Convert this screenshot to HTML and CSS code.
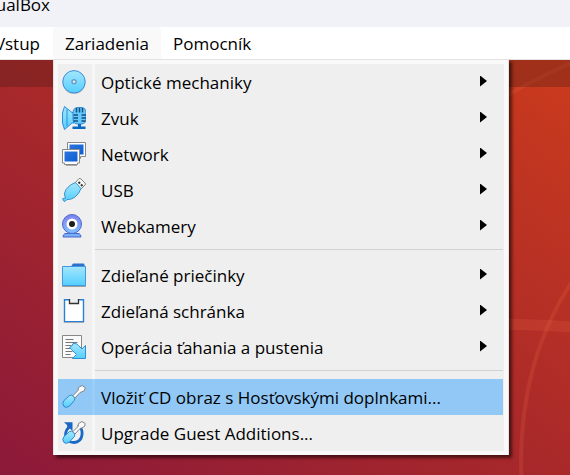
FILE: index.html
```html
<!DOCTYPE html>
<html lang="sk">
<head>
<meta charset="utf-8">
<title>VirtualBox</title>
<link rel="stylesheet" href="styles.css">
</head>
<body>
<header class="titlebar"><span class="title">ualBox</span></header>
<nav class="menubar">
  <button class="menubar-item menubar-first" type="button">Vstup</button>
  <div class="menu-anchor">
    <button class="menubar-item menubar-open" type="button" aria-expanded="true">Zariadenia</button>
    <div class="menu" role="menu">
      <div class="group">
        <button class="item" role="menuitem" type="button">
          <span class="icon"><svg viewBox="0 0 24 24"><circle cx="12" cy="12.500" r="11.500" fill="#999" opacity=".5"/><circle cx="12" cy="11.800" r="11.200" fill="url(#blue)" stroke="#3f8ed8"/><circle cx="12" cy="11.800" r="2" fill="#e4eef4" stroke="#6b9fc9" stroke-width="1.500"/></svg></span>
          <span class="label">Optické mechaniky</span><span class="arrow"></span>
        </button>
        <button class="item" role="menuitem" type="button">
          <span class="icon"><svg viewBox="0 0 24 24"><path d="M.5 7 2.500.5 10 6.500h2V17h-2l-7.500 6.500L.5 17z" fill="url(#blue)" stroke="#2d8bd8"/><path d="M5 3v17" stroke="#2d8bd8" fill="none"/><path d="M11 7q0-5.500 5-5.500h3q5 0 5 5.500v6q0 5-5 5h-3q-5 0-5-5z" fill="#64c9ff" stroke="#2f8ad8"/><path d="M14.500 2v4.500m3-4.500v4.500m3-4.500v4.500" stroke="#164d7b" stroke-width="1.500"/><path d="M11.500 9H16m3.500 0H24M11.500 12H16m3.500 0H24M11.500 15H16m3.500 0h4" stroke="#164d7b" stroke-width="1.500"/><path d="M16 18h3v2.500h4.500v2.500h-13v-2.500H16z" fill="#0868c4"/></svg></span>
          <span class="label">Zvuk</span><span class="arrow"></span>
        </button>
        <button class="item" role="menuitem" type="button">
          <span class="icon"><svg viewBox="0 0 24 24"><path d="M5.500.5h18v14h-5v2h-13z" fill="#fff" stroke="#888"/><path d="M7.500 2.500h14v10h-14z" fill="url(#screen)"/><path d="M.5 7.500h17v13.500h-2v1.500h-13V21h-2z" fill="#fff" stroke="#888"/><path d="M2.500 9.500h13v10h-13z" fill="url(#screen)"/><path d="M4 23.500h11" stroke="#aaa"/></svg></span>
          <span class="label">Network</span><span class="arrow"></span>
        </button>
        <button class="item" role="menuitem" type="button">
          <span class="icon"><svg viewBox="0 0 24 24"><path d="m12.500 5.500 4.500-5q1-.5 2 .5L23 5q1 1 0 2l-5 5z" fill="#f7f7f7" stroke="#858585"/><path d="m16.500 4 1.500 1.500M19 6.500 20.500 8" stroke="#333" stroke-width="2"/><path d="M3.500 20Q1 16 4 11.500 8 6 13.500 4.500l5.500 6q-1.500 5-6.500 9-4 2.500-7.500 2L3 23.500Q.5 23 .8 20.500z" fill="url(#blue)" stroke="#3f91c9"/></svg></span>
          <span class="label">USB</span><span class="arrow"></span>
        </button>
        <button class="item" role="menuitem" type="button">
          <span class="icon"><svg viewBox="0 0 24 24"><path d="M3 19.500h14q2 1 2 3.500H1q0-2.500 2-3.500z" fill="#78aefa" stroke="#4968c8"/><circle cx="10" cy="10" r="9.500" fill="url(#lens)" stroke="#4968c8"/><circle cx="10" cy="10" r="5.500" fill="#fff"/><circle cx="10" cy="10" r="3" fill="#1d1d1d"/></svg></span>
          <span class="label">Webkamery</span><span class="arrow"></span>
        </button>
      </div>
      <hr class="separator">
      <div class="group">
        <button class="item" role="menuitem" type="button">
          <span class="icon"><svg viewBox="0 0 24 24"><path d="m9 3.500 2-3h11l1 3v1H9z" fill="#2c70ce"/><path d="M.5 3.500h23v19H.5z" fill="url(#blue)" stroke="#4399dd"/><path d="M0 23.500h24" stroke="#9e9e9e"/></svg></span>
          <span class="label">Zdieľané priečinky</span><span class="arrow"></span>
        </button>
        <button class="item" role="menuitem" type="button">
          <span class="icon"><svg viewBox="0 0 24 24"><path d="M2.500.8h19v22h-19z" fill="#fff" stroke="#2880d8" stroke-width="1.400"/><path d="M7.500 0v4.500h9V0" fill="#ededed" stroke="#333" stroke-width="1.300"/><path d="M2 23.700h20" stroke="#aaa"/></svg></span>
          <span class="label">Zdieľaná schránka</span><span class="arrow"></span>
        </button>
        <button class="item" role="menuitem" type="button">
          <span class="icon"><svg viewBox="0 0 24 24"><path d="M.5.5h19v22H.5z" fill="#fafafa" stroke="#888"/><path d="M3.500 4.500h8m-8 3h12m-12 3h6m-6 3h5m-5 3h7m-7 3h5" stroke="#777"/><path d="M7.500 12.500q3-1 3.500-4 4-.5 5.500 2l3.500 3.500 3.500-3.500v13h-13l4-4-4-4q-1.500-2-3-3z" fill="url(#blue)" stroke="#2f8fd4"/></svg></span>
          <span class="label">Operácia ťahania a pustenia</span><span class="arrow"></span>
        </button>
      </div>
      <hr class="separator">
      <div class="group group-last">
        <button class="item item-active" role="menuitem" type="button">
          <span class="icon"><svg viewBox="0 0 24 24"><use href="#driver"/></svg></span>
          <span class="label">Vložiť CD obraz s Hosťovskými doplnkami...</span>
        </button>
        <button class="item" role="menuitem" type="button">
          <span class="icon"><svg viewBox="0 0 24 24"><path d="M16 4Q21 8 20 14q-1 7-8 7.500-7 0-8.500-6Q3 9 8 5" fill="none" stroke="#1769c5" stroke-width="2.800"/><path d="M2 1.200h8.500v9L8 7.500 6 9 5 4z" fill="#1769c5"/><use href="#driver"/></svg></span>
          <span class="label">Upgrade Guest Additions...</span>
        </button>
      </div>
    </div>
  </div>
  <button class="menubar-item" type="button">Pomocník</button>
</nav>
<main class="desktop">
  <svg class="rings" viewBox="0 0 570 415" preserveAspectRatio="xMaxYMin slice">
    <path d="M500 40Q533 19 580-1" stroke-width="4"/>
    <path d="M490 265Q530 263 580 268" stroke-width="11"/>
    <path d="M580 210C540 265 516 335 522 430" stroke-width="4"/>
  </svg>
  <div class="panel"></div>
</main>
<svg class="defs" width="0" height="0">
  <defs>
    <linearGradient id="blue" x2="0" y2="1"><stop stop-color="#a4e6fd"/><stop offset="1" stop-color="#54cfff"/></linearGradient>
    <linearGradient id="screen" x2="1" y2="1"><stop stop-color="#2b74da"/><stop offset="1" stop-color="#0b5fd6"/></linearGradient>
    <linearGradient id="lens" x2="0" y2="1"><stop stop-color="#8080ee"/><stop offset="1" stop-color="#80c2ff"/></linearGradient>
    <g id="driver"><path d="m10.500 11 5.500-5.500.5-3L20 .5l3.200 2-.7 3-3 1.500-1.500.5-5 5.500z" fill="#fafafa" stroke="#858585"/><path d="m2 15.500 5.500-5q2-1 4 .8t1 4l-5 5.700q-3 2.500-5.500.5-2.500-3 0-6z" fill="url(#blue)" stroke="#3188ca"/></g>
  </defs>
</svg>
</body>
</html>
```
FILE: styles.css
```css
* { box-sizing: border-box; }

body {
  margin: 0;
  min-height: 100vh;
  display: flex;
  flex-direction: column;
  overflow: hidden;
  font: 17px/24px "Open Sans", "Noto Sans", sans-serif;
  color: #000;
}

button {
  font: inherit;
  color: inherit;
  border: 0;
  padding: 0;
  background: none;
  text-align: left;
  white-space: nowrap;
}

.titlebar {
  height: 27px;
  overflow: hidden;
  background: #f1f2f7;
  line-height: 10px;
}

.title {
  display: flex;
  justify-content: flex-end;
  width: 50px;
}

.menubar {
  display: flex;
  height: 33px;
  background: #fff;
  border-bottom: 1px solid #e5e5e5;
}

.menubar-item {
  height: 32px;
  padding: 2px 12px 0;
}

.menubar-first {
  display: flex;
  align-items: center;
  justify-content: flex-end;
  width: 53px;
  padding-right: 13px;
  padding-left: 0;
  overflow: hidden;
}

.menubar-open {
  background: #f9f9f9;
  border-radius: 4px 4px 0 0;
}

.menu-anchor { position: relative; }

.menu {
  position: absolute;
  z-index: 1;
  top: 32px;
  left: 0;
  width: 456px;
  padding: 4px;
  background: #f9f9f9;
  border: 1px solid #e2e2e2;
  border-bottom-width: 0;
  box-shadow: 3px 3px 3px rgba(0, 0, 0, .55);
  clip-path: inset(0 -10px -10px 0);
}

.group, .separator {
  background: linear-gradient(90deg, #efefef 34px, #f6f6f6 34px 37px, #efefef 37px);
}

.group-last { padding-top: 1px; }

.item {
  display: grid;
  grid-template-columns: 34px 1fr 24px;
  column-gap: 9px;
  align-items: center;
  width: 100%;
  height: 36px;
}

.item-active {
  width: calc(100% - 1px);
  background: linear-gradient(90deg, #91c8f6 34px, #9acdf7 34px 37px, #91c8f6 37px);
}

.icon {
  display: grid;
  justify-content: center;
  padding-right: 2px;
}

.icon svg {
  width: 24px;
  height: 24px;
}

.label { padding-top: 2px; }

.arrow {
  width: 7px;
  height: 11px;
  margin-bottom: 2px;
  background: #000;
  clip-path: polygon(0 0, 100% 50%, 0 100%);
}

.separator {
  height: 13px;
  margin: 0;
  padding: 5px 1px 0 37px;
  border: 0;
}

.separator::before {
  content: "";
  display: block;
  height: 1px;
  background: #d2d2d2;
}

.desktop {
  flex: 1;
  display: grid;
  background: linear-gradient(to top right, #8b1939, #a9292a 50%, #c8391e 95%);
}

.desktop > * { grid-area: 1 / 1; }

.rings {
  width: 100%;
  height: 100%;
  fill: none;
  stroke: #ed6745;
  stroke-opacity: .2;
}

.panel {
  height: 27px;
  background: rgba(35, 20, 15, .24);
}

.defs { position: absolute; }
```
